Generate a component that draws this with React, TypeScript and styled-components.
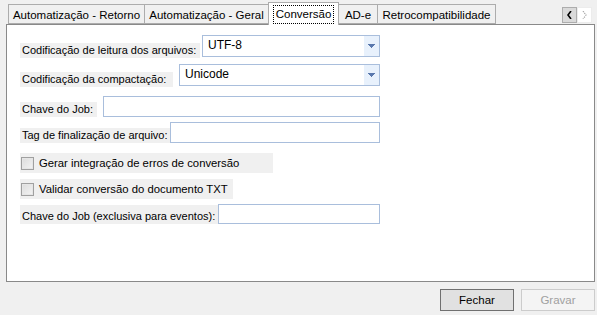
import React from "react";
import styled, { createGlobalStyle } from "styled-components";

const Global = createGlobalStyle`
  html, body { margin: 0; padding: 0; background: #f0f0f0; }
  body { font-family: "Liberation Sans", Arial, sans-serif; font-size: 11px; color: #000; }
  * { box-sizing: border-box; }
`;

const Window = styled.div`
  width: 597px;
  height: 315px;
  background: #f0f0f0;
  display: flex;
  flex-direction: column;
  overflow: hidden;
`;

const TabStrip = styled.div`
  height: 24px;
  display: flex;
  align-items: flex-end;
  padding-left: 8px;
  position: relative;
  z-index: 1;
`;

const Tab = styled.div<{ $w: number; $active?: boolean }>`
  width: ${(p) => p.$w}px;
  height: ${(p) => (p.$active ? 23 : 20)}px;
  margin-bottom: ${(p) => (p.$active ? -1 : 0)}px;
  background: ${(p) => (p.$active ? "#ffffff" : "#f0f0f0")};
  border: 1px solid #acacac;
  border-bottom: ${(p) => (p.$active ? "none" : "1px solid #acacac")};
  margin-left: -1px;
  display: flex;
  align-items: ${(p) => (p.$active ? "flex-start" : "center")};
  justify-content: center;
  padding-top: ${(p) => (p.$active ? 2 : 1)}px;
  white-space: nowrap;
  font-size: 11.5px;
  &:first-child { margin-left: 0; }
`;

const Focus = styled.span`
  border: 1px dotted #000;
  padding: 1px 2px 2px 2px;
  line-height: 14px;
`;

const Spacer = styled.div`
  flex: 1;
`;

const Scroller = styled.div`
  display: flex;
  align-self: flex-start;
  margin-top: 7px;
  margin-right: 5px;
`;

const ScrollBtn = styled.div<{ $disabled?: boolean }>`
  width: 15px;
  height: 16px;
  display: flex;
  align-items: center;
  justify-content: center;
  background: ${(p) => (p.$disabled ? "#ffffff" : "#dadada")};
  border: 1px solid ${(p) => (p.$disabled ? "#ececec" : "#adadad")};
`;

const Panel = styled.div`
  margin-left: 6px;
  width: 589px;
  height: 258px;
  background: #ffffff;
  border: 1px solid #898989;
  padding: 10px 0 0 13px;
  display: flex;
  flex-direction: column;
`;

const Row = styled.div<{ $mt: number; $h: number }>`
  margin-top: ${(p) => p.$mt}px;
  height: ${(p) => p.$h}px;
  width: 360px;
  display: flex;
  align-items: flex-end;
`;

const Label = styled.div<{ $w: number; $h?: number }>`
  width: ${(p) => p.$w}px;
  height: ${(p) => p.$h ?? 15}px;
  background: #f0f0f0;
  padding-left: 2px;
  padding-bottom: 1px;
  line-height: 13px;
  display: flex;
  align-items: flex-end;
  white-space: nowrap;
  flex-shrink: 0;
  font-size: 11px;
`;

const Gap = styled.div<{ $w: number }>`
  width: ${(p) => p.$w}px;
  flex-shrink: 0;
`;

const Combo = styled.div`
  flex: 1;
  height: 22px;
  align-self: flex-start;
  border: 1px solid #a9bedc;
  display: flex;
  align-items: center;
  background: #fff;
`;

const ComboText = styled.div`
  flex: 1;
  padding-left: 5px;
  padding-bottom: 3px;
  font-size: 12px;
`;

const ComboArrow = styled.div`
  width: 15px;
  height: 100%;
  background: #e8f1fc;
  display: flex;
  align-items: center;
  justify-content: center;
`;

const TextBox = styled.div`
  flex: 1;
  align-self: stretch;
  border: 1px solid #a9bedc;
  background: #fff;
`;

const CheckRow = styled.div<{ $mt: number; $w: number }>`
  margin-top: ${(p) => p.$mt}px;
  width: ${(p) => p.$w}px;
  height: 20px;
  background: #f0f0f0;
  display: flex;
  align-items: center;
  padding-left: 1px;
  white-space: nowrap;
  font-size: 11.3px;
`;

const CheckBox = styled.div`
  width: 13px;
  height: 13px;
  flex-shrink: 0;
  border: 1px solid #a0a0a0;
  background: linear-gradient(135deg, #dcdcdc, #f4f4f4);
  box-shadow: inset 0 0 0 1px #e6e6e6;
  margin-right: 5px;
  margin-top: 1px;
`;

const Footer = styled.div`
  flex: 1;
  display: flex;
  justify-content: flex-end;
  align-items: flex-start;
  padding-top: 7px;
  padding-right: 2px;
  gap: 7px;
`;

const Button = styled.div<{ $disabled?: boolean }>`
  width: 74px;
  height: 22px;
  display: flex;
  align-items: center;
  justify-content: center;
  font-size: 11.5px;
  border: 1px solid ${(p) => (p.$disabled ? "#cccccc" : "#707070")};
  background: ${(p) => (p.$disabled ? "#f4f4f4" : "#e1e1e1")};
  color: ${(p) => (p.$disabled ? "#a0a0a0" : "#000")};
`;

const DownArrow = () => (
  <svg width="7" height="4" viewBox="0 0 7 4">
    <path d="M0 0H7V1H6V2H5V3H4V4H3V3H2V2H1V1H0Z" fill="#5a78ad" />
  </svg>
);

const LeftArrow = () => (
  <svg width="5" height="8" viewBox="0 0 5 8">
    <path d="M4 0 L1 4 L4 8" stroke="#000" strokeWidth="1.6" fill="none" />
  </svg>
);

const RightArrow = () => (
  <svg width="5" height="8" viewBox="0 0 5 8">
    <path d="M1 0 L4 4 L1 8" stroke="#a8a8a8" strokeWidth="1.2" fill="none" strokeDasharray="1.3 1" />
  </svg>
);

export default function App() {
  return (
    <Window>
      <Global />
      <TabStrip>
        <Tab $w={137}>Automatização - Retorno</Tab>
        <Tab $w={125}>Automatização - Geral</Tab>
        <Tab $w={71} $active>
          <Focus>Conversão</Focus>
        </Tab>
        <Tab $w={40}>AD-e</Tab>
        <Tab $w={119}>Retrocompatibilidade</Tab>
        <Spacer />
        <Scroller>
          <ScrollBtn>
            <LeftArrow />
          </ScrollBtn>
          <ScrollBtn $disabled>
            <RightArrow />
          </ScrollBtn>
        </Scroller>
      </TabStrip>
      <Panel>
        <Row $mt={0} $h={23}>
          <Label $w={180}>Codificação de leitura dos arquivos:</Label>
          <Gap $w={2} />
          <Combo>
            <ComboText>UTF-8</ComboText>
            <ComboArrow>
              <DownArrow />
            </ComboArrow>
          </Combo>
        </Row>
        <Row $mt={6} $h={23}>
          <Label $w={153}>Codificação da compactação:</Label>
          <Gap $w={6} />
          <Combo>
            <ComboText>Unicode</ComboText>
            <ComboArrow>
              <DownArrow />
            </ComboArrow>
          </Combo>
        </Row>
        <Row $mt={9} $h={21}>
          <Label $w={77}>Chave do Job:</Label>
          <Gap $w={6} />
          <TextBox />
        </Row>
        <Row $mt={5} $h={21}>
          <Label $w={150}>Tag de finalização de arquivo:</Label>
          <TextBox />
        </Row>
        <CheckRow $mt={10} $w={253}>
          <CheckBox />
          Gerar integração de erros de conversão
        </CheckRow>
        <CheckRow $mt={6} $w={213}>
          <CheckBox />
          Validar conversão do documento TXT
        </CheckRow>
        <Row $mt={5} $h={20}>
          <Label $w={198} $h={19}>Chave do Job (exclusiva para eventos):</Label>
          <TextBox />
        </Row>
      </Panel>
      <Footer>
        <Button>Fechar</Button>
        <Button $disabled>Gravar</Button>
      </Footer>
    </Window>
  );
}
